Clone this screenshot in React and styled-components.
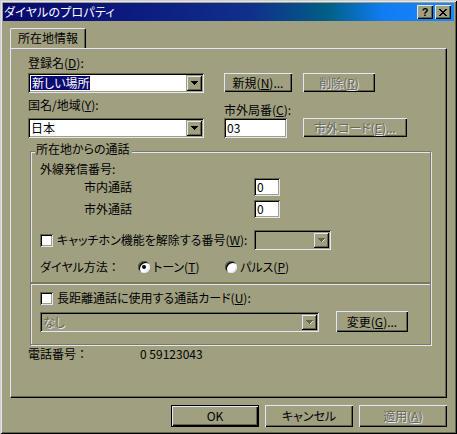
import React from 'react';
import styled, { createGlobalStyle, css } from 'styled-components';

const FACE = '#a0a080';
const LIGHT = '#e4e4ff';
const SHADOW = '#646448';
const DARK = '#000000';
const GRAYTEXT = '#6a6a4e';
const NAVY = '#0a0a72';

const GlobalStyle = createGlobalStyle`
  html, body {
    margin: 0;
    padding: 0;
    background: ${FACE};
  }
  body {
    font-family: "Noto Sans CJK JP", "MS UI Gothic", sans-serif;
    font-size: 12px;
    line-height: 14px;
    color: #000;
    font-feature-settings: "palt";
  }
  * {
    box-sizing: border-box;
  }
`;

const sunken = css`
  box-shadow: inset 1px 1px ${SHADOW}, inset -1px -1px ${LIGHT},
    inset 2px 2px ${DARK}, inset -2px -2px ${FACE};
`;

const raised = css`
  box-shadow: inset 1px 1px ${LIGHT}, inset -1px -1px ${DARK},
    inset -2px -2px ${SHADOW};
`;

const engraved = css`
  color: ${GRAYTEXT};
  text-shadow: 1px 1px 0 ${LIGHT};
`;

const Window = styled.div`
  width: 457px;
  height: 434px;
  display: flex;
  flex-direction: column;
  padding: 3px;
  background: ${FACE};
  box-shadow: inset 1px 1px #d0d0c0, inset -1px -1px ${DARK},
    inset 2px 2px ${LIGHT}, inset -2px -2px ${SHADOW};
`;

const TitleBar = styled.div`
  flex: none;
  height: 18px;
  display: flex;
  align-items: center;
  justify-content: space-between;
  padding: 0 3px 0 1px;
  color: #fff;
  background: linear-gradient(
    90deg,
    #08086c 0%,
    #0c1c80 30%,
    #10308c 55%,
    #005f86 72%,
    #107cf0 84%,
    #1888ff 100%
  );
`;

const Title = styled.span`
  font-size: 12px;
  letter-spacing: 0.2px;
`;

const CaptionButtons = styled.div`
  display: flex;
  gap: 2px;
`;

const CaptionButton = styled.div`
  width: 16px;
  height: 14px;
  display: flex;
  align-items: center;
  justify-content: center;
  background: ${FACE};
  color: #000;
  font-family: "Liberation Sans", sans-serif;
  font-weight: bold;
  font-size: 11px;
  ${raised}
`;

const Body = styled.div`
  flex: 1;
  display: flex;
  flex-direction: column;
  padding: 7px 7px 0 7px;
`;

const TabStrip = styled.div`
  display: flex;
  height: 20px;
`;

const Tab = styled.div`
  position: relative;
  z-index: 1;
  width: 76px;
  height: 20px;
  margin-bottom: -1px;
  padding: 2px 0 0 7px;
  background: ${FACE};
  border-top: 1px solid ${LIGHT};
  border-left: 1px solid ${LIGHT};
  border-right: 1px solid ${DARK};
  box-shadow: inset -1px 0 ${SHADOW};
  border-radius: 2px 2px 0 0;
`;

const Panel = styled.div`
  flex: none;
  height: 350px;
  display: flex;
  flex-direction: column;
  padding: 7px 0 0 17px;
  border-top: 1px solid ${LIGHT};
  border-left: 1px solid ${LIGHT};
  border-right: 1px solid ${DARK};
  border-bottom: 1px solid ${DARK};
  box-shadow: inset -1px -1px ${SHADOW};
`;

const TopGrid = styled.div`
  display: grid;
  grid-template-columns: 196px 79px auto;
  grid-template-rows: 17px 20px 25px 20px;
  align-items: start;
`;

const Label = styled.span`
  display: block;
  white-space: nowrap;
  margin-top: ${p => p.$mt || 0}px;
  grid-column: ${p => p.$span || 'auto'};
`;

const Colon = styled.span`
  font-feature-settings: normal;
`;

const ComboBox = styled.div`
  display: flex;
  width: ${p => p.$w}px;
  height: 20px;
  padding: 2px;
  background: ${p => (p.$disabled ? FACE : '#fff')};
  ${sunken}
`;

const ComboText = styled.div`
  flex: 1;
  display: flex;
  align-items: center;
  padding-left: 1px;
  white-space: nowrap;
  overflow: hidden;
  ${p => p.$disabled && engraved}
`;

const Selected = styled.span`
  background: ${NAVY};
  color: #fff;
  padding: 0 1px;
`;

const ArrowButton = styled.div`
  width: 16px;
  height: 16px;
  display: flex;
  align-items: center;
  justify-content: center;
  background: ${FACE};
  box-shadow: inset 1px 1px ${FACE}, inset -1px -1px ${DARK},
    inset 2px 2px ${LIGHT}, inset -2px -2px ${SHADOW};
`;

const TextBox = styled.div`
  width: ${p => p.$w}px;
  height: ${p => p.$h || 20}px;
  display: flex;
  align-items: center;
  padding: 2px 3px;
  background: #fff;
  ${sunken}
`;

const Button = styled.button`
  width: ${p => p.$w}px;
  height: ${p => p.$h || 19}px;
  margin: 0;
  padding: 0;
  border: none;
  display: flex;
  align-items: center;
  justify-content: center;
  font: inherit;
  color: #000;
  background: ${FACE};
  white-space: nowrap;
  ${raised}
  ${p =>
    p.$default &&
    css`
      box-shadow: inset 0 0 0 1px ${DARK}, inset 2px 2px ${LIGHT},
        inset -2px -2px ${DARK}, inset -3px -3px ${SHADOW};
    `}
  &:disabled {
    ${engraved}
  }
`;

const GroupBox = styled.div`
  display: flex;
  flex-direction: column;
  width: 401px;
  height: ${p => p.$h}px;
  margin: ${p => p.$mt || 0}px 0 0 2px;
  padding: 0 0 0 9px;
  border: 1px solid #7a7a5e;
  box-shadow: inset 1px 1px ${LIGHT}, 1px 1px ${LIGHT};
`;

const Legend = styled.span`
  align-self: flex-start;
  margin: -10px 0 0 -5px;
  padding: 0 2px 0 1px;
  background: ${FACE};
`;

const Row = styled.div`
  display: flex;
  align-items: center;
  height: ${p => p.$h}px;
  margin-top: ${p => p.$mt || 0}px;
`;

const FieldLabel = styled.span`
  flex: none;
  width: ${p => p.$w}px;
  padding-left: ${p => p.$indent || 0}px;
  display: flex;
  align-items: center;
  white-space: nowrap;
`;

const CheckBox = styled.span`
  flex: none;
  width: 13px;
  height: 13px;
  margin-right: 4px;
  background: #fff;
  ${sunken}
`;

const RadioOption = styled.span`
  flex: none;
  width: ${p => p.$w}px;
  display: flex;
  align-items: center;
  white-space: nowrap;
`;

const RadioDot = styled.span`
  flex: none;
  width: 12px;
  height: 12px;
  margin-right: 3px;
  border-radius: 50%;
  background: #fff;
  display: flex;
  align-items: center;
  justify-content: center;
  box-shadow: inset 1px 1px ${SHADOW}, inset -1px -1px ${LIGHT},
    inset 2px 2px ${DARK};
  &::after {
    content: '';
    width: 4px;
    height: 4px;
    border-radius: 50%;
    background: ${p => (p.$checked ? '#000' : 'transparent')};
  }
`;

const PhoneRow = styled.div`
  display: flex;
  margin-top: 2px;
`;

const Footer = styled.div`
  display: flex;
  justify-content: flex-end;
  gap: 6px;
  margin-top: 7px;
`;

const Arrow = ({ disabled }) => (
  <svg width="7" height="4" viewBox="0 0 7 4" shapeRendering="crispEdges">
    {disabled && <path d="M4 3h1v1h-1zM5 2h1v1h-1zM6 1h1v1h-1z" fill={LIGHT} />}
    <path d="M0 0h7v1h-7zM1 1h5v1h-5zM2 2h3v1h-3zM3 3h1v1h-1z" fill={disabled ? SHADOW : '#000'} />
  </svg>
);

const Combo = ({ w, disabled, children }) => (
  <ComboBox $w={w} $disabled={disabled}>
    <ComboText $disabled={disabled}>{children}</ComboText>
    <ArrowButton>
      <Arrow disabled={disabled} />
    </ArrowButton>
  </ComboBox>
);

const CloseIcon = () => (
  <svg width="8" height="7" viewBox="0 0 8 7" shapeRendering="crispEdges">
    <path
      d="M0 0h2v1h-2zM6 0h2v1h-2zM1 1h2v1h-2zM5 1h2v1h-2zM2 2h4v1h-4zM3 3h2v1h-2zM2 4h4v1h-4zM1 5h2v1h-2zM5 5h2v1h-2zM0 6h2v1h-2zM6 6h2v1h-2z"
      fill="#000"
    />
  </svg>
);

const App = () => {
  return (
    <>
      <GlobalStyle />
      <Window>
        <TitleBar>
          <Title>ダイヤルのプロパティ</Title>
          <CaptionButtons>
            <CaptionButton>?</CaptionButton>
            <CaptionButton>
              <CloseIcon />
            </CaptionButton>
          </CaptionButtons>
        </TitleBar>
        <Body>
          <TabStrip>
            <Tab>所在地情報</Tab>
          </TabStrip>
          <Panel>
            <TopGrid>
              <Label $span="1 / 4">
                登録名(<u>D</u>):
              </Label>

              <Combo w={176}>
                <Selected>新しい場所</Selected>
              </Combo>
              <Button $w={68}>
                新規(<u>N</u>)...
              </Button>
              <Button $w={72} disabled>
                削除(<u>R</u>)
              </Button>

              <Label $mt={5}>
                国名/地域(<u>Y</u>):
              </Label>
              <Label $mt={10} $span="2 / 4">
                市外局番(<u>C</u>):
              </Label>

              <Combo w={176}>日本</Combo>
              <TextBox $w={63}>03</TextBox>
              <Button $w={104} disabled>
                市外コード(<u>E</u>)...
              </Button>
            </TopGrid>

            <GroupBox $h={132} $mt={13}>
              <Legend>所在地からの通話</Legend>
              <Row $h={14} $mt={6}>外線発信番号:</Row>
              <Row $h={18} $mt={2}>
                <FieldLabel $w={214} $indent={44}>市内通話</FieldLabel>
                <TextBox $w={26} $h={18}>0</TextBox>
              </Row>
              <Row $h={18} $mt={4}>
                <FieldLabel $w={214} $indent={44}>市外通話</FieldLabel>
                <TextBox $w={26} $h={18}>0</TextBox>
              </Row>
              <Row $h={20} $mt={12}>
                <FieldLabel $w={214}>
                  <CheckBox />
                  キャッチホン機能を解除する番号(<u>W</u>):
                </FieldLabel>
                <Combo w={77} disabled />
              </Row>
              <Row $h={14} $mt={10}>
                <RadioOption $w={98}>
                  ダイヤル方法<Colon>：</Colon>
                </RadioOption>
                <RadioOption $w={87}>
                  <RadioDot $checked />
                  トーン(<u>T</u>)
                </RadioOption>
                <RadioOption $w={80}>
                  <RadioDot />
                  パルス(<u>P</u>)
                </RadioOption>
              </Row>
            </GroupBox>

            <GroupBox $h={62}>
              <Row $h={14} $mt={7}>
                <CheckBox />
                長距離通話に使用する通話カード(<u>U</u>):
              </Row>
              <Row $h={21} $mt={6}>
                <Combo w={279} disabled>
                  なし
                </Combo>
                <FieldLabel $w={17} />
                <Button $w={72} $h={21}>
                  変更(<u>G</u>)...
                </Button>
              </Row>
            </GroupBox>

            <PhoneRow>
              <FieldLabel $w={112}>
                電話番号<Colon>：</Colon>
              </FieldLabel>
              <span>0 59123043</span>
            </PhoneRow>
          </Panel>

          <Footer>
            <Button $w={88} $h={22} $default>
              OK
            </Button>
            <Button $w={88} $h={22}>
              キャンセル
            </Button>
            <Button $w={88} $h={22} disabled>
              適用(<u>A</u>)
            </Button>
          </Footer>
        </Body>
      </Window>
    </>
  );
};

export default App;
